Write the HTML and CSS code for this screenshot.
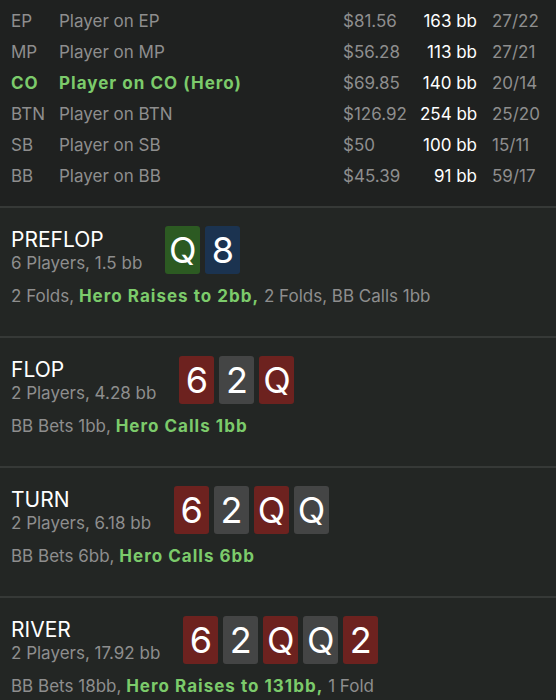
FILE: index.html
```html
<!DOCTYPE html>
<html lang="en">
<head>
    <meta charset="UTF-8">
    <meta name="viewport" content="width=device-width, initial-scale=1.0">
    <title>Hand history</title>
    <link rel="stylesheet" href="styles.css">
</head>
<body>
    <div class="players">
        <div class="player-row">
            <span class="pos">EP</span>
            <span class="name">Player on EP</span>
            <span class="money">$81.56</span>
            <span class="stack">163 bb</span>
            <span class="ratio">27/22</span>
        </div>
        <div class="player-row">
            <span class="pos">MP</span>
            <span class="name">Player on MP</span>
            <span class="money">$56.28</span>
            <span class="stack">113 bb</span>
            <span class="ratio">27/21</span>
        </div>
        <div class="player-row hero">
            <span class="pos">CO</span>
            <span class="name">Player on CO (Hero)</span>
            <span class="money">$69.85</span>
            <span class="stack">140 bb</span>
            <span class="ratio">20/14</span>
        </div>
        <div class="player-row">
            <span class="pos">BTN</span>
            <span class="name">Player on BTN</span>
            <span class="money">$126.92</span>
            <span class="stack">254 bb</span>
            <span class="ratio">25/20</span>
        </div>
        <div class="player-row">
            <span class="pos">SB</span>
            <span class="name">Player on SB</span>
            <span class="money">$50</span>
            <span class="stack">100 bb</span>
            <span class="ratio">15/11</span>
        </div>
        <div class="player-row">
            <span class="pos">BB</span>
            <span class="name">Player on BB</span>
            <span class="money">$45.39</span>
            <span class="stack">91 bb</span>
            <span class="ratio">59/17</span>
        </div>
    </div>

    <div class="street">
        <div class="street-head">
            <div class="street-info">
                <div class="street-name">PREFLOP</div>
                <div class="street-pot">6 Players, 1.5 bb</div>
            </div>
            <div class="cards">
                <span class="card green">Q</span>
                <span class="card blue">8</span>
            </div>
        </div>
        <div class="actions">2 Folds, <b>Hero Raises to 2bb,</b> 2 Folds, BB Calls 1bb</div>
    </div>

    <div class="street">
        <div class="street-head">
            <div class="street-info">
                <div class="street-name">FLOP</div>
                <div class="street-pot">2 Players, 4.28 bb</div>
            </div>
            <div class="cards">
                <span class="card red">6</span>
                <span class="card grey">2</span>
                <span class="card red">Q</span>
            </div>
        </div>
        <div class="actions">BB Bets 1bb, <b>Hero Calls 1bb</b></div>
    </div>

    <div class="street">
        <div class="street-head">
            <div class="street-info">
                <div class="street-name">TURN</div>
                <div class="street-pot">2 Players, 6.18 bb</div>
            </div>
            <div class="cards">
                <span class="card red">6</span>
                <span class="card grey">2</span>
                <span class="card red">Q</span>
                <span class="card grey">Q</span>
            </div>
        </div>
        <div class="actions">BB Bets 6bb, <b>Hero Calls 6bb</b></div>
    </div>

    <div class="street">
        <div class="street-head">
            <div class="street-info">
                <div class="street-name">RIVER</div>
                <div class="street-pot">2 Players, 17.92 bb</div>
            </div>
            <div class="cards">
                <span class="card red">6</span>
                <span class="card grey">2</span>
                <span class="card red">Q</span>
                <span class="card grey">Q</span>
                <span class="card red">2</span>
            </div>
        </div>
        <div class="actions">BB Bets 18bb, <b>Hero Raises to 131bb,</b> 1 Fold</div>
    </div>
</body>
</html>
```

FILE: styles.css
```css
body {
    margin: 0;
    background: #232624;
    font-family: Inter, 'Noto Sans', sans-serif;
    font-size: 17px;
    color: #8e8e8e;
}

.players {
    background: #1f2120;
    padding: 5px 0 15px 11px;
}

.player-row {
    display: grid;
    grid-template-columns: 48px 1fr 77px 57px 79px;
    height: 31px;
    align-items: center;
    white-space: nowrap;
}

.stack {
    color: #fff;
    text-align: right;
}

.ratio {
    padding-left: 15px;
}

.hero .pos,
.hero .name {
    color: #7ccb6b;
    font-weight: 700;
    letter-spacing: 0.06em;
}

.street {
    border-top: 2px solid #363937;
    padding: 18px 11px 30px;
}

.street-head {
    display: flex;
    align-items: flex-start;
    gap: 23px;
}

.street-info {
    padding-top: 2px;
    white-space: nowrap;
}

.street-name {
    color: #fff;
    font-size: 21px;
    line-height: 24px;
}

.street-pot {
    line-height: 22px;
}

.cards {
    display: flex;
    gap: 5px;
}

.card {
    width: 35px;
    height: 48px;
    border-radius: 3px;
    color: #fff;
    font-size: 36px;
    line-height: 48px;
    text-align: center;
}

.green { background: #2c5a22; }
.blue { background: #1b3350; }
.red { background: #6d221f; }
.grey { background: #444545; }

.actions {
    margin-top: 12px;
    line-height: 20px;
}

.actions b {
    color: #7ccb6b;
    letter-spacing: 0.06em;
}
```
